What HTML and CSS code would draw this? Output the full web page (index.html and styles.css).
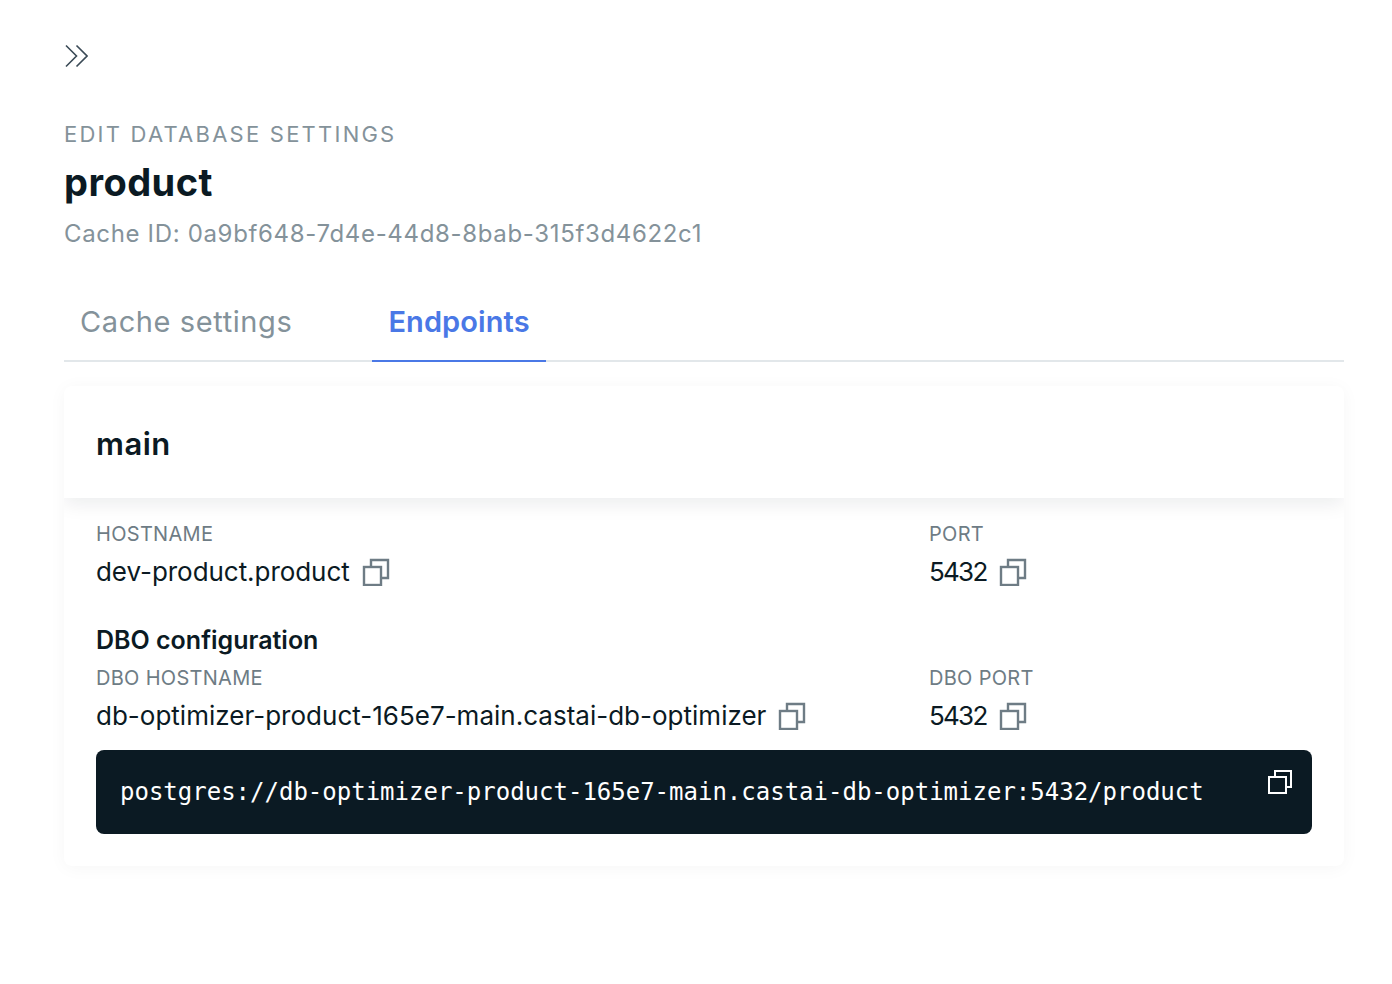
FILE: index.html
```html
<!DOCTYPE html>
<html lang="en">
<head>
<meta charset="utf-8">
<title>Edit database settings</title>
<link rel="stylesheet" href="styles.css">
</head>
<body>
<main class="drawer">
  <button class="collapse" type="button" aria-label="Collapse">
    <svg width="24" height="24" viewBox="0 0 24 24" fill="none" stroke="#3a4a56" stroke-width="1.6"><path d="M2 1.5 12.5 12 2 22.5"/><path d="M12.5 1.5 23 12 12.5 22.5"/></svg>
  </button>
  <header class="head">
    <div class="eyebrow">EDIT DATABASE SETTINGS</div>
    <h1 class="title">product</h1>
    <div class="subtitle">Cache ID: 0a9bf648-7d4e-44d8-8bab-315f3d4622c1</div>
  </header>
  <nav class="tabs">
    <a class="tab">Cache settings</a>
    <a class="tab active">Endpoints</a>
  </nav>
  <section class="card">
    <div class="card-head">main</div>
    <div class="card-body">
      <div class="row">
        <div class="field">
          <div class="label">HOSTNAME</div>
          <div class="value"><span>dev-product.product</span>
            <svg class="copy" viewBox="0 0 28 28" fill="none" stroke="#6e7c85" stroke-width="2.4"><path d="M9 8V2h17v18h-7"/><rect x="2" y="9" width="17" height="18"/></svg>
          </div>
        </div>
        <div class="field">
          <div class="label">PORT</div>
          <div class="value"><span class="num">5432</span>
            <svg class="copy" viewBox="0 0 28 28" fill="none" stroke="#6e7c85" stroke-width="2.4"><path d="M9 8V2h17v18h-7"/><rect x="2" y="9" width="17" height="18"/></svg>
          </div>
        </div>
      </div>
      <h2 class="section">DBO configuration</h2>
      <div class="row">
        <div class="field">
          <div class="label">DBO HOSTNAME</div>
          <div class="value"><span class="long">db-optimizer-product-165e7-main.castai-db-optimizer</span>
            <svg class="copy" viewBox="0 0 28 28" fill="none" stroke="#6e7c85" stroke-width="2.4"><path d="M9 8V2h17v18h-7"/><rect x="2" y="9" width="17" height="18"/></svg>
          </div>
        </div>
        <div class="field">
          <div class="label">DBO PORT</div>
          <div class="value"><span class="num">5432</span>
            <svg class="copy" viewBox="0 0 28 28" fill="none" stroke="#6e7c85" stroke-width="2.4"><path d="M9 8V2h17v18h-7"/><rect x="2" y="9" width="17" height="18"/></svg>
          </div>
        </div>
      </div>
      <div class="code">
        <code>postgres://db-optimizer-product-165e7-main.castai-db-optimizer:5432/product</code>
        <svg class="copy-light" viewBox="0 0 24 24" fill="none" stroke="#fff" stroke-width="2"><path d="M7 6V1h16v16h-5"/><rect x="1" y="7" width="17" height="16"/></svg>
      </div>
    </div>
  </section>
</main>
</body>
</html>
```
FILE: styles.css
```css
* { box-sizing: border-box; }
html, body { margin: 0; padding: 0; background: #fff; }
body { font-family: Inter, "Noto Sans", sans-serif; color: #0c1b24; }
.drawer { width: 1392px; height: 984px; padding: 44px 48px 0 64px; }
.collapse { display: block; width: 24px; height: 24px; padding: 0; border: 0; background: none; }
.collapse svg { display: block; }
.head { margin-top: 54px; }
.eyebrow { font-size: 22px; line-height: 24px; letter-spacing: 2.24px; color: #84929a; font-weight: 400; }
.title { margin: 12px 0 0; font-size: 38px; line-height: 48px; font-weight: 700; color: #0b1a23; letter-spacing: .45px; }
.subtitle { margin-top: 12px; font-size: 24px; line-height: 32px; color: #84929a; letter-spacing: .66px; }
.tabs { display: flex; margin-top: 30px; border-bottom: 2px solid #e2e7ea; height: 82px; }
.tab { height: 82px; padding: 0 16px; font-size: 29px; line-height: 84px; color: #84929a; margin-right: 64px; letter-spacing: .6px; }
.tab.active { margin-right: 0; color: #4a78e6; font-weight: 600; border-bottom: 2px solid #4a78e6; letter-spacing: .1px; }
.card { margin-top: 24px; background: #fff; border-radius: 8px; box-shadow: 0 2px 18px rgba(12,27,36,.04); height: 480px; overflow: hidden; }
.card-head { height: 112px; padding: 0 32px; font-size: 31px; line-height: 116px; font-weight: 600; color: #0b1a23; letter-spacing: .5px; box-shadow: 0 6px 18px rgba(12,27,36,.08); position: relative; }
.card-body { padding: 24px 32px 0; }
.row { display: grid; grid-template-columns: 833px 1fr; }
.label { font-size: 20px; line-height: 24px; letter-spacing: .3px; color: #6e7c85; }
.value { display: flex; align-items: center; gap: 12px; margin-top: 10px; font-size: 26px; line-height: 32px; color: #0b1a23; letter-spacing: -.05px; }
.long { letter-spacing: .01px; }
.num { letter-spacing: -1.75px; }
.copy { width: 28px; height: 28px; }
.section { margin: 36px 0 0; font-size: 25px; line-height: 32px; font-weight: 600; color: #0b1a23; }
.section + .row { margin-top: 10px; }
.code { position: relative; height: 84px; margin-top: 18px; padding: 0 24px; background: #0b1a23; border-radius: 8px; color: #fff; }
.code code { display: block; font-family: "DejaVu Sans Mono", monospace; font-size: 24px; line-height: 84px; }
.copy-light { position: absolute; top: 20px; right: 20px; width: 24px; height: 24px; }
```
